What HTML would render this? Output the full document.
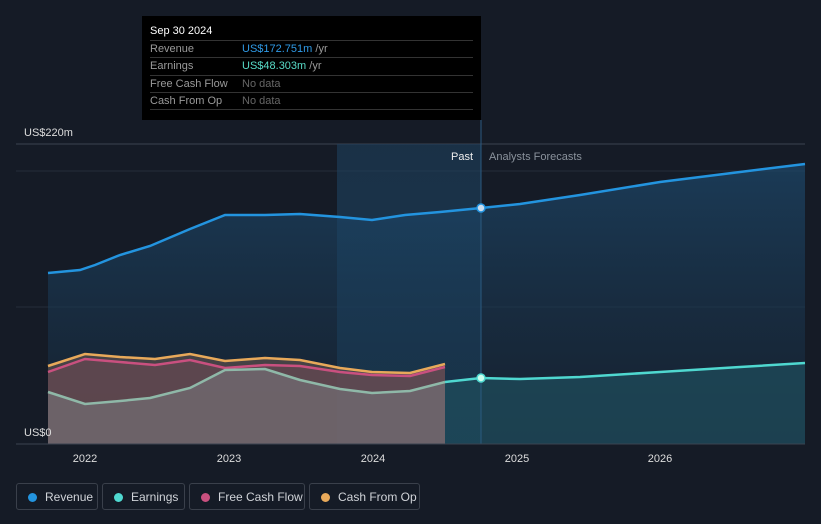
<!DOCTYPE html>
<html><head><style>
body{margin:0;width:821px;height:524px;background:#151b26;font-family:"Liberation Sans",sans-serif;overflow:hidden;position:relative}
.leg{position:absolute;top:483px;height:27px;border:1px solid #3a404b;border-radius:3px;color:#d0d3d8;font-size:12px;line-height:27px;box-sizing:border-box;padding-left:28px}
.leg i{position:absolute;left:11px;top:9px;width:9px;height:9px;border-radius:50%}
.tt{position:absolute;left:142px;top:16px;width:339px;height:104px;background:#000;color:#fff;font-size:11px}
.tt .r{position:absolute;left:8px;right:8px;border-top:1px solid #333;height:17px;line-height:17px;color:#9a9a9a}
.tt .r span{position:absolute;left:92px}
</style></head><body>
<svg width="821" height="524" style="position:absolute;left:0;top:0">
<defs>
<linearGradient id="rv" x1="0" y1="0" x2="0" y2="1"><stop offset="0" stop-color="#1d4a6e" stop-opacity=".9"/><stop offset="1" stop-color="#17283a" stop-opacity=".6"/></linearGradient>
<linearGradient id="hl" x1="0" y1="0" x2="0" y2="1"><stop offset="0" stop-color="#1e3f5c"/><stop offset="1" stop-color="#1a4a6a"/></linearGradient>
</defs>
<line x1="16" y1="144" x2="805" y2="144" stroke="#3a4350"/>
<line x1="16" y1="171" x2="805" y2="171" stroke="#252d39"/>
<line x1="16" y1="307" x2="805" y2="307" stroke="#252d39"/>
<rect x="337" y="144" width="144" height="300" fill="url(#hl)" opacity=".6"/>
<path d="M48,273 L80,270 95,265 120,255 150,246 190,229 225,215 265,215 300,214 340,217 372,220 405,215 440,212 481,208 520,204 580,195 660,182 740,172 805,164 L805,444 48,444Z" fill="url(#rv)" opacity=".75"/>
<path d="M445,444 L445,382 481,378 520,379 580,377 660,372 740,367 805,363 L805,444Z" fill="#1f4f5e" opacity=".7"/>
<path d="M48,366 L85,354 120,357 155,359 190,354 225,361 265,358 300,360 340,368 372,372 410,373 445,364 L445,444 48,444Z" fill="#6e5a50" opacity=".55"/>
<path d="M48,372 L85,359 120,362 155,365 190,360 225,368 265,365 300,366 340,372 372,375 410,376 445,367 L445,444 48,444Z" fill="#6b4a55" opacity=".6"/>
<path d="M48,392 L85,404 120,401 150,398 190,388 225,370 265,369 300,380 340,389 372,393 410,391 445,382 L445,444 48,444Z" fill="#7a7a80" opacity=".55"/>
<path d="M48,273 L80,270 95,265 120,255 150,246 190,229 225,215 265,215 300,214 340,217 372,220 405,215 440,212 481,208 520,204 580,195 660,182 740,172 805,164" fill="none" stroke="#2394df" stroke-width="2.5"/>
<path d="M48,366 L85,354 120,357 155,359 190,354 225,361 265,358 300,360 340,368 372,372 410,373 445,364" fill="none" stroke="#e8a95a" stroke-width="2.5"/>
<path d="M48,372 L85,359 120,362 155,365 190,360 225,368 265,365 300,366 340,372 372,375 410,376 445,367" fill="none" stroke="#c9507f" stroke-width="2.5"/>
<path d="M48,392 L85,404 120,401 150,398 190,388 225,370 265,369 300,380 340,389 372,393 410,391 445,382" fill="none" stroke="#8fb8a8" stroke-width="2.5"/>
<path d="M445,382 L481,378 520,379 580,377 660,372 740,367 805,363" fill="none" stroke="#4fd8d0" stroke-width="2.5"/>
<line x1="481" y1="120" x2="481" y2="444" stroke="#2a5a80"/>
<line x1="16" y1="444" x2="805" y2="444" stroke="#3a4350"/>
<circle cx="481" cy="208" r="4" fill="#cde" stroke="#2394df" stroke-width="1.5"/>
<circle cx="481" cy="378" r="4" fill="#cfe" stroke="#4fd8d0" stroke-width="1.5"/>
<g font-size="11" fill="#ddd" text-anchor="middle"><text x="85" y="462">2022</text><text x="229" y="462">2023</text><text x="373" y="462">2024</text><text x="517" y="462">2025</text><text x="660" y="462">2026</text></g>
<text x="24" y="136" font-size="11" fill="#ddd">US$220m</text>
<text x="24" y="436" font-size="11" fill="#ddd">US$0</text>
<text x="473" y="160" font-size="11" fill="#eee" text-anchor="end">Past</text>
<text x="489" y="160" font-size="11" fill="#8a929c">Analysts Forecasts</text>
</svg>
<div class="tt">
<div style="position:absolute;left:8px;top:9px;font-size:11px">Sep 30 2024</div>
<div class="r" style="top:24px">Revenue<span><b style="font-weight:normal;color:#2f9ae6">US$172.751m</b> /yr</span></div>
<div class="r" style="top:41px">Earnings<span><b style="font-weight:normal;color:#58dcc8">US$48.303m</b> /yr</span></div>
<div class="r" style="top:59px">Free Cash Flow<span style="color:#666">No data</span></div>
<div class="r" style="top:76px">Cash From Op<span style="color:#666">No data</span></div>
<div class="r" style="top:93px;height:0"></div>
</div>
<div class="leg" style="left:16px;width:82px"><i style="background:#2394df"></i>Revenue</div>
<div class="leg" style="left:102px;width:83px"><i style="background:#4fd8d0"></i>Earnings</div>
<div class="leg" style="left:189px;width:116px"><i style="background:#c9507f"></i>Free Cash Flow</div>
<div class="leg" style="left:309px;width:111px"><i style="background:#e8a95a"></i>Cash From Op</div>
</body></html>
